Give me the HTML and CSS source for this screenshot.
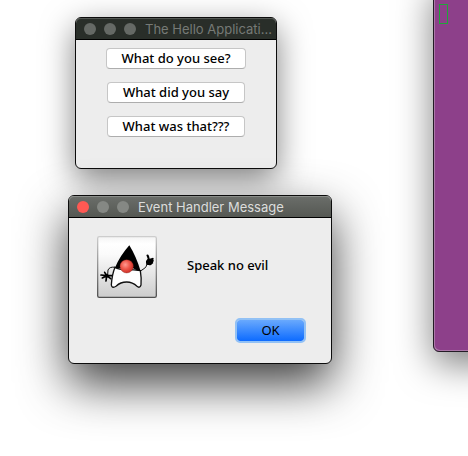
FILE: index.html
```html
<!DOCTYPE html>
<html lang="en">
<head>
<meta charset="utf-8">
<title>The Hello Application</title>
<link rel="stylesheet" href="styles.css">
</head>
<body>
<main class="desktop">
  <section class="terminal" aria-label="Terminal"><span class="terminal-cursor"></span></section>

  <section class="window window-app">
    <header class="titlebar titlebar-inactive">
      <button class="light" aria-label="Close"></button>
      <button class="light" aria-label="Minimize"></button>
      <button class="light" aria-label="Zoom"></button>
      <h1 class="title">The Hello Applicati...</h1>
    </header>
    <div class="app-body">
      <button class="push">What do you see?</button>
      <button class="push">What did you say</button>
      <button class="push">What was that???</button>
    </div>
  </section>

  <section class="window window-message" role="dialog" aria-labelledby="message-title">
    <header class="titlebar titlebar-active">
      <button class="light light-close" aria-label="Close"></button>
      <button class="light" aria-label="Minimize"></button>
      <button class="light" aria-label="Zoom"></button>
      <h1 class="title" id="message-title">Event Handler Message</h1>
    </header>
    <div class="message-body">
      <div class="message-row">
        <svg class="duke" viewBox="0 0 180 186" aria-hidden="true">
          <defs>
            <linearGradient id="plate" x1="0" y1="0" x2="0" y2="1">
              <stop offset="0" stop-color="#f4f4f4"/>
              <stop offset=".12" stop-color="#ffffff"/>
              <stop offset=".3" stop-color="#fafafa"/>
              <stop offset="1" stop-color="#cccccc"/>
            </linearGradient>
            <linearGradient id="edge" x1="0" y1="0" x2="0" y2="1">
              <stop offset="0" stop-color="#cdcdcd"/>
              <stop offset="1" stop-color="#505050"/>
            </linearGradient>
            <radialGradient id="nose" cx=".4" cy=".38" r=".68">
              <stop offset="0" stop-color="#ff9a90"/>
              <stop offset=".5" stop-color="#ee5548"/>
              <stop offset="1" stop-color="#c52a22"/>
            </radialGradient>
          </defs>
          <rect x="2" y="2" width="176" height="182" rx="5" fill="url(#plate)" stroke="url(#edge)" stroke-width="4"/>
          <path d="M55 94Q38 91 33 102L32 116M129 106L141 98Q149 94 150 83" fill="none" stroke="#111" stroke-width="3"/>
          <path d="M29 119L12 117M29 119L16 126M29 119L27 135M29 119L41 128M29 119L23 109M29 119L45 119" fill="none" stroke="#000" stroke-width="5" stroke-linecap="round"/>
          <circle cx="29" cy="119" r="6"/>
          <path d="M148 57Q153 53 156 60L158 68L168 65Q172 67 169 71Q173 75 168 78Q171 82 165 84Q162 90 155 87Q147 87 147 80Q145 75 152 68Z"/>
          <path d="M54 94Q65 101 89 101Q112 101 130 104Q134 128 132 147Q128 158 120 151Q107 138 89 138Q70 138 58 150Q45 159 43 147Q45 116 54 94Z" fill="#fff" stroke="#111" stroke-width="4"/>
          <path d="M97 28Q118 62 131 106Q118 104 107 96H71Q63 98 54 95Q70 58 97 28Z"/>
          <circle cx="89" cy="91" r="20" fill="url(#nose)" stroke="#7d1d16" stroke-width="1"/>
        </svg>
        <p class="message">Speak no evil</p>
      </div>
      <div class="actions"><button class="ok">OK</button></div>
    </div>
  </section>
</main>
</body>
</html>
```

FILE: styles.css
```css
* {
  box-sizing: border-box;
}

body {
  margin: 0;
  background: #fff;
  color: #000;
  font: 500 13px/16px "Noto Sans", "Open Sans", sans-serif;
}

.desktop {
  position: relative;
  min-height: 100vh;
  overflow: hidden;
}

button {
  margin: 0;
  padding: 0;
  font: inherit;
  color: inherit;
}

.terminal {
  position: absolute;
  left: 433px;
  top: -20px;
  width: 320px;
  height: 372px;
  padding: 23px 5px;
  background: #8d408a;
  border: 1px solid #241c26;
  border-radius: 6px;
  box-shadow: inset 1px -1px #ab77a8, 0 12px 36px rgba(0, 0, 0, .5);
}

.terminal-cursor {
  display: block;
  width: 9px;
  height: 20px;
  border: 1px solid #20a53a;
}

.window {
  position: absolute;
  background: #ededed;
  border: 1px solid #0c0c0c;
  border-radius: 6px;
}

.window-app {
  left: 75px;
  top: 17px;
  width: 202px;
  height: 152px;
  box-shadow: 0 10px 32px rgba(0, 0, 0, .5);
}

.window-message {
  left: 68px;
  top: 195px;
  width: 264px;
  height: 169px;
  box-shadow: 0 20px 48px rgba(0, 0, 0, .76);
}

.titlebar {
  display: flex;
  align-items: center;
  gap: 8px;
  height: 22px;
  padding: 0 8px;
  border-bottom: 1px solid #000;
  border-radius: 5px 5px 0 0;
}

.titlebar-inactive {
  background: #292e29;
  box-shadow: inset 0 1px #525652;
  color: #767a76;
}

.titlebar-active {
  background: linear-gradient(#6b6e6a, #555853);
  box-shadow: inset 0 1px #8b8e8a;
  color: #dcdddc;
}

.light {
  flex: none;
  width: 12px;
  height: 12px;
  border: 0;
  border-radius: 50%;
  background: #656965;
}

.titlebar-active .light {
  background: #858884;
}

.titlebar-active .light-close {
  background: #ff5953;
}

.title {
  margin: 0;
  padding-left: 1px;
  font: 400 13px/16px Inter, Roboto, sans-serif;
  white-space: nowrap;
}

.app-body {
  display: flex;
  flex-direction: column;
  align-items: center;
  gap: 13px;
  padding-top: 8px;
}

.push {
  height: 21px;
  padding: 0 15px 1px;
  background: #fff;
  border: 1px solid #c6c6c6;
  border-bottom-color: #adadad;
  border-radius: 4px;
}

.message-body {
  padding: 18px 25px 0 28px;
}

.message-row {
  display: flex;
  align-items: center;
  gap: 30px;
}

.duke {
  flex: none;
  width: 60px;
  height: 62px;
}

.message {
  margin: 0;
  padding-bottom: 4px;
}

.actions {
  display: flex;
  justify-content: flex-end;
  padding-top: 20px;
}

.ok {
  width: 71px;
  height: 25px;
  padding-bottom: 1px;
  font-weight: 400;
  background: linear-gradient(#69a9fd, #0d6bff) padding-box;
  border: 2px solid #92c1f5;
  border-radius: 5px;
}
```
